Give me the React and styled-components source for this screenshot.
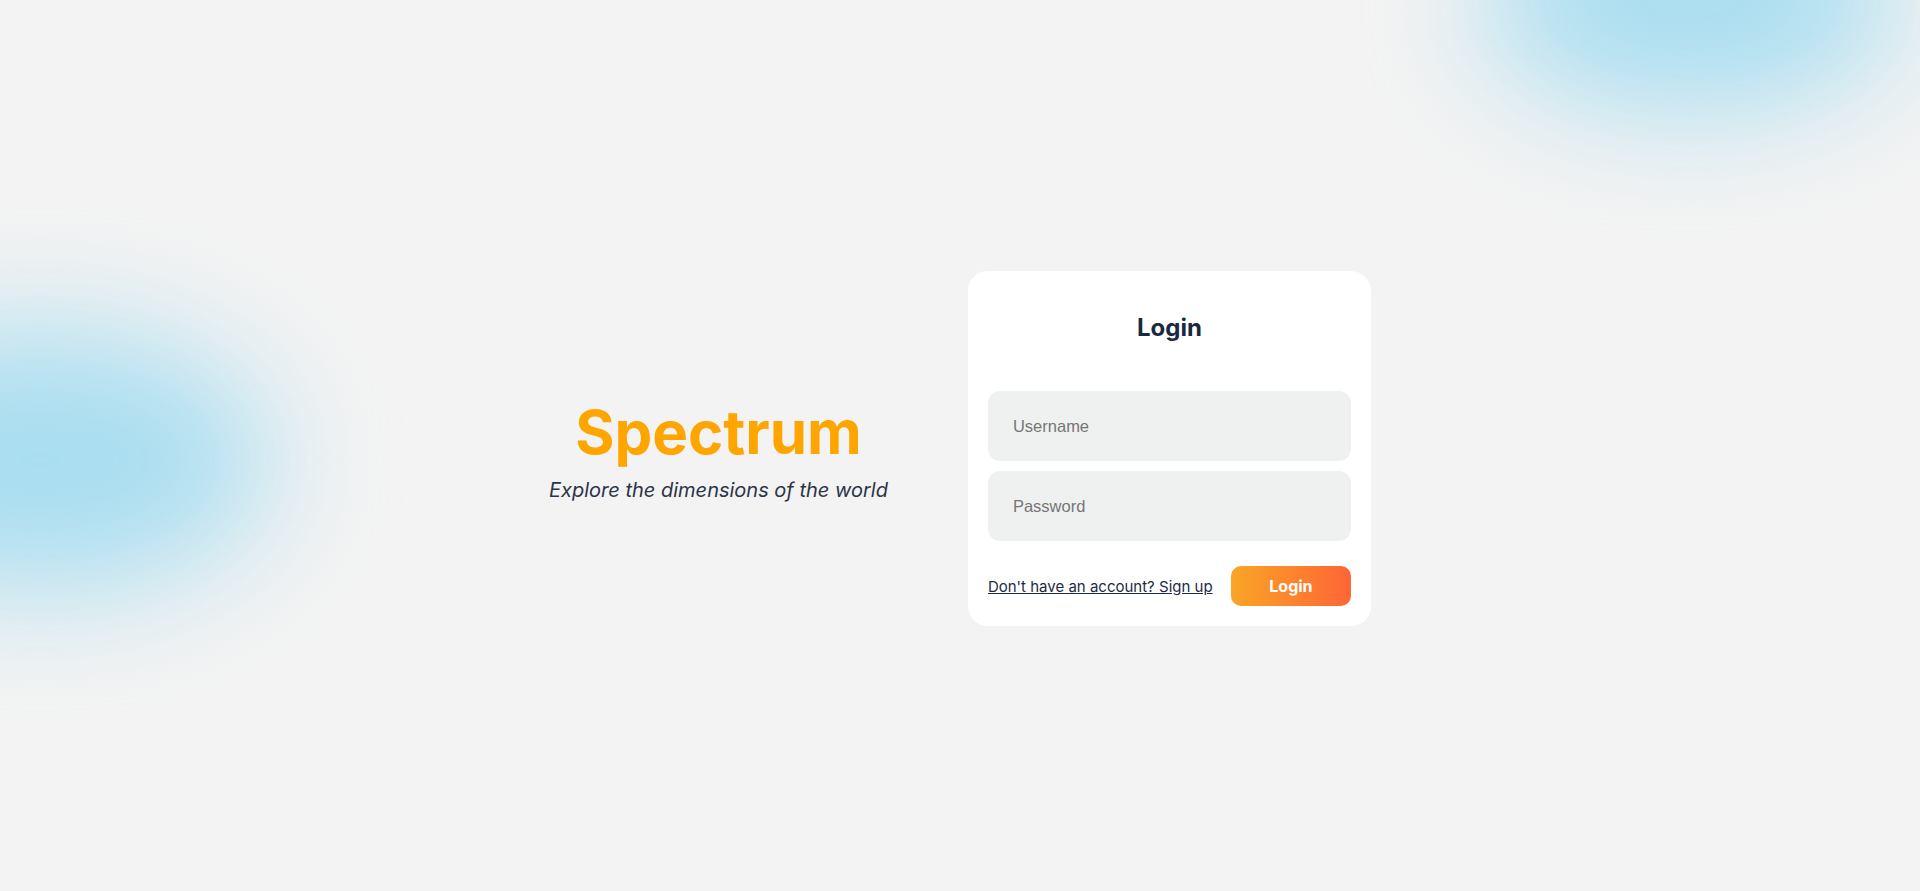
import React from "react";
import styled, { createGlobalStyle } from "styled-components";

const GlobalStyle = createGlobalStyle`
  * {
    box-sizing: border-box;
  }

  body {
    margin: 0;
    background: #f3f3f3;
    font-family: Inter, "Noto Sans", sans-serif;
  }
`;

const Page = styled.main`
  position: relative;
  display: flex;
  align-items: center;
  justify-content: center;
  gap: 80px;
  min-height: 100vh;
  padding-top: 6px;
  overflow: hidden;
`;

const Blob = styled.div`
  position: absolute;
  left: ${(props) => props.x}px;
  top: ${(props) => props.y}px;
  width: ${(props) => props.w}px;
  height: ${(props) => props.h}px;
  border-radius: 50%;
  background: #a8ddf0;
  filter: blur(60px);
  pointer-events: none;
`;

const Brand = styled.section`
  position: relative;
  display: flex;
  flex-direction: column;
  align-items: center;
  text-align: center;
`;

const BrandName = styled.h1`
  margin: 0;
  color: #ffa500;
  font-size: 60px;
  font-weight: 700;
  line-height: normal;
`;

const Tagline = styled.p`
  margin: 10px 0 0;
  color: #2b3548;
  font-size: 20px;
  font-style: italic;
  line-height: normal;
`;

const Card = styled.form`
  position: relative;
  display: flex;
  flex-direction: column;
  width: 403px;
  padding: 20px;
  background: #ffffff;
  border-radius: 20px;
`;

const CardTitle = styled.h2`
  margin: 22px 0 49px;
  color: #1c2740;
  font-size: 24px;
  font-weight: 700;
  line-height: 29px;
  text-align: center;
`;

const Fields = styled.div`
  display: flex;
  flex-direction: column;
  gap: 10px;
`;

const Field = styled.input`
  height: 70px;
  padding: 0 25px;
  border: 0;
  border-radius: 12px;
  background: #eff1f0;
  color: #333;
  font-family: "Liberation Sans", Arial, sans-serif;
  font-size: 16.5px;
  outline: none;

  &::placeholder {
    color: #757575;
  }
`;

const Actions = styled.div`
  display: flex;
  align-items: center;
  justify-content: space-between;
  margin-top: 25px;
`;

const SignUpLink = styled.a`
  color: #1e2a44;
  font-size: 15px;
  text-decoration: underline;
  cursor: pointer;
`;

const SubmitButton = styled.button`
  width: 120px;
  height: 40px;
  border: 0;
  border-radius: 10px;
  background: linear-gradient(90deg, #f9a526 0%, #ff6536 100%);
  color: #ffffff;
  font-family: Inter, sans-serif;
  font-size: 16px;
  font-weight: 700;
  cursor: pointer;
`;

export default function App() {
  return (
    <>
      <GlobalStyle />
      <Page>
        <Blob x={-190} y={330} w={460} h={260} />
        <Blob x={1480} y={-110} w={420} h={220} />

        <Brand>
          <BrandName>Spectrum</BrandName>
          <Tagline>Explore the dimensions of the world</Tagline>
        </Brand>

        <Card onSubmit={(e) => e.preventDefault()}>
          <CardTitle>Login</CardTitle>
          <Fields>
            <Field type="text" placeholder="Username" />
            <Field type="password" placeholder="Password" />
          </Fields>
          <Actions>
            <SignUpLink>Don't have an account? Sign up</SignUpLink>
            <SubmitButton type="submit">Login</SubmitButton>
          </Actions>
        </Card>
      </Page>
    </>
  );
}
